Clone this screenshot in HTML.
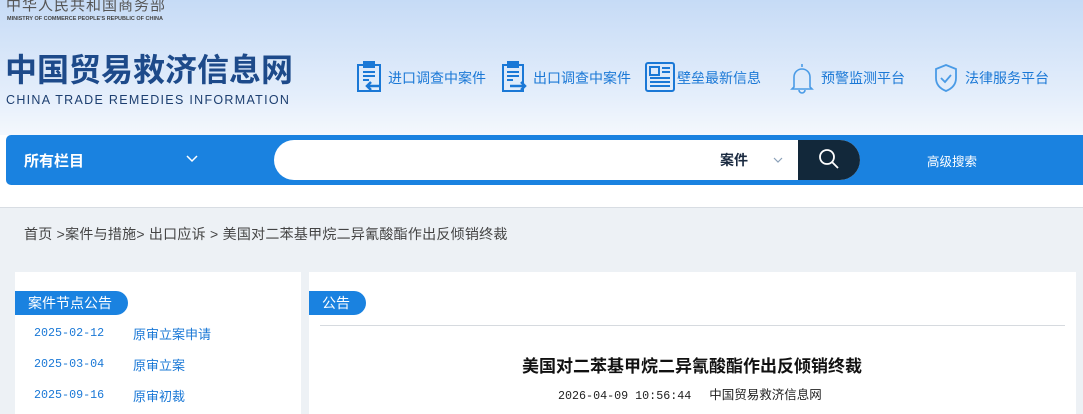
<!DOCTYPE html>
<html><head><meta charset="utf-8"><style>
*{margin:0;padding:0;box-sizing:border-box}
body{width:1083px;height:414px;overflow:hidden;font-family:"Liberation Sans","Noto Sans CJK SC",sans-serif;background:#fff;position:relative}
.hdr{position:absolute;left:0;top:0;width:1083px;height:135px;background:linear-gradient(#c6dbf6,#e4eefb 70%,#f4f8fd)}
.a{position:absolute;white-space:nowrap}
.nav{font-size:14px;color:#1a78d6}
.bar{position:absolute;left:6px;top:135px;width:1090px;height:50px;background:#1a82e0;border-radius:5px}
.gray{position:absolute;left:0;top:207px;width:1083px;height:207px;background:#edf1f5;border-top:1px solid #d8dde3}
.tag{position:absolute;height:24px;background:#1a82e0;color:#fff;font-size:14px;line-height:24px;border-radius:0 12px 12px 0}
.d{font-family:"Liberation Mono","Noto Sans CJK SC",monospace;font-size:11.7px;color:#1a78d6}
</style></head><body>
<div class="hdr"></div>
<div class="a" style="left:6px;top:-3px;font-size:15px;line-height:18px;color:#555;letter-spacing:1px">中华人民共和国商务部</div>
<div class="a" style="left:7px;top:16px;font-size:5.5px;line-height:6px;color:#444;font-weight:bold">MINISTRY OF COMMERCE PEOPLE'S REPUBLIC OF CHINA</div>
<div class="a" style="left:5px;top:52px;font-size:32px;font-weight:bold;color:#1d4a8a;line-height:36px">中国贸易救济信息网</div>
<div class="a" style="left:6px;top:93px;font-size:12.5px;color:#1d3f70;letter-spacing:1.3px">CHINA TRADE REMEDIES INFORMATION</div>

<svg class="a" style="left:357px;top:61px" width="26" height="32" viewBox="0 0 26 32" fill="none" stroke="#1a78d6" stroke-width="2"><rect x="1" y="4" width="22" height="26"/><rect x="7" y="1" width="10" height="5" fill="#1a78d6"/><path d="M6 11h12M6 15h12M6 19h6"/><path d="M24 25H10M14 21l-4 4 4 4" stroke-width="2.5"/></svg>
<div class="a nav" style="left:388px;top:68px">进口调查中案件</div>
<svg class="a" style="left:502px;top:61px" width="26" height="32" viewBox="0 0 26 32" fill="none" stroke="#1a78d6" stroke-width="2"><rect x="1" y="4" width="20" height="26"/><rect x="6" y="1" width="10" height="5" fill="#1a78d6"/><path d="M5 11h12M5 15h12M5 19h6"/><path d="M8 25h15M19 21l4 4-4 4" stroke-width="2.5"/></svg>
<div class="a nav" style="left:533px;top:68px">出口调查中案件</div>
<svg class="a" style="left:645px;top:62px" width="30" height="30" viewBox="0 0 30 30" fill="none" stroke="#1a78d6" stroke-width="2"><rect x="1" y="1" width="28" height="28" rx="2"/><rect x="5" y="5" width="9" height="8"/><path d="M17 6h8M17 10h8M5 16h20M5 20h20M5 24h20"/></svg>
<div class="a nav" style="left:677px;top:68px">壁垒最新信息</div>
<svg class="a" style="left:790px;top:62px" width="24" height="32" viewBox="0 0 24 32" fill="none" stroke="#4a9be6" stroke-width="1.6"><path d="M12 2v3M4 25V15a8 8 0 0 1 16 0v10l2 2H2z"/><path d="M9 28a3 3 0 0 0 6 0"/></svg>
<div class="a nav" style="left:821px;top:68px">预警监测平台</div>
<svg class="a" style="left:933px;top:63px" width="26" height="30" viewBox="0 0 26 30" fill="none" stroke="#4a9be6" stroke-width="1.8"><path d="M13 2l10 4v9c0 7-5 11-10 13C8 26 3 22 3 15V6z"/><path d="M8 15l4 4 6-7"/></svg>
<div class="a nav" style="left:965px;top:68px">法律服务平台</div>

<div class="bar"></div>
<div class="a" style="left:24px;top:150px;color:#fff;font-size:15px;font-weight:bold">所有栏目</div>
<svg class="a" style="left:186px;top:155px" width="12" height="8" viewBox="0 0 12 8" fill="none" stroke="#fff" stroke-width="1.5"><path d="M1 1l5 5 5-5"/></svg>
<div class="a" style="left:274px;top:140px;width:586px;height:40px;background:#fff;border-radius:20px;overflow:hidden">
<div class="a" style="left:524px;top:0;width:62px;height:40px;background:#12283a"></div></div>
<div class="a" style="left:720px;top:150px;font-size:14px;color:#1a2a40;font-weight:bold">案件</div>
<svg class="a" style="left:773px;top:157px" width="10" height="6" viewBox="0 0 10 6" fill="none" stroke="#8aa0b8" stroke-width="1.2"><path d="M1 1l4 4 4-4"/></svg>
<svg class="a" style="left:818px;top:148px" width="22" height="22" viewBox="0 0 22 22" fill="none" stroke="#fff" stroke-width="1.8"><circle cx="9" cy="9" r="7"/><path d="M14 14l6 6"/></svg>
<div class="a" style="left:927px;top:151px;font-size:12.5px;color:#fff">高级搜索</div>

<div class="gray"></div>
<div class="a" style="left:24px;top:224px;font-size:14px;color:#444;letter-spacing:0.25px">首页 &gt;案件与措施&gt; 出口应诉 &gt; 美国对二苯基甲烷二异氰酸酯作出反倾销终裁</div>
<div class="a" style="left:15px;top:272px;width:286px;height:142px;background:#fff"></div>
<div class="a" style="left:309px;top:272px;width:767px;height:142px;background:#fff"></div>
<div class="tag" style="left:15px;top:291px;width:113px;padding-left:13px">案件节点公告</div>
<div class="tag" style="left:309px;top:291px;width:57px;padding-left:13px">公告</div>
<div class="a" style="left:320px;top:325px;width:745px;height:1px;background:#d6dadf"></div>
<div class="a d" style="left:34px;top:326px">2025-02-12</div><div class="a" style="left:133px;top:324px;font-size:13px;color:#1a78d6">原审立案申请</div>
<div class="a d" style="left:34px;top:357px">2025-03-04</div><div class="a" style="left:133px;top:355px;font-size:13px;color:#1a78d6">原审立案</div>
<div class="a d" style="left:34px;top:388px">2025-09-16</div><div class="a" style="left:133px;top:386px;font-size:13px;color:#1a78d6">原审初裁</div>
<div class="a" style="left:522px;top:352px;font-size:17px;font-weight:bold;color:#111">美国对二苯基甲烷二异氰酸酯作出反倾销终裁</div>
<div class="a" style="left:558px;top:384px;font-size:12.5px;color:#222"><span style="font-family:'Liberation Mono',monospace;font-size:11.7px">2026-04-09 10:56:44</span><span style="display:inline-block;width:18px"></span>中国贸易救济信息网</div>
</body></html>
